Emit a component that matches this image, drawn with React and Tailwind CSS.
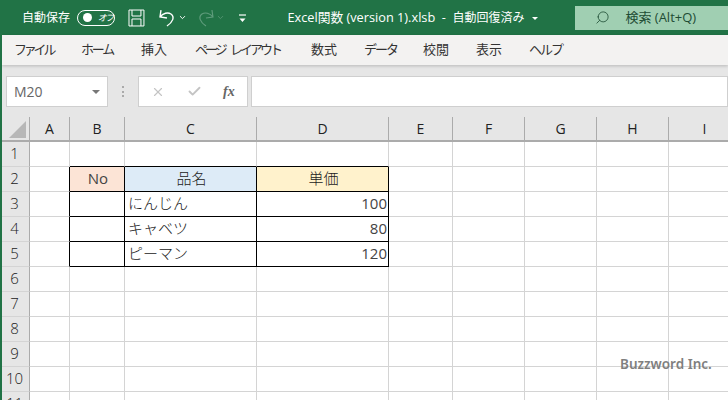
import React from 'react';
import { Search, ChevronDown, X, Check } from 'lucide-react';

const jp = 'font-["Open_Sans","Noto_Sans_CJK_JP",sans-serif]';
const cols = [
  { name: 'A', w: 'w-[40px]' },
  { name: 'B', w: 'w-[55px]' },
  { name: 'C', w: 'w-[132px]' },
  { name: 'D', w: 'w-[132px]' },
  { name: 'E', w: 'w-[64px]' },
  { name: 'F', w: 'w-[72px]' },
  { name: 'G', w: 'w-[72px]' },
  { name: 'H', w: 'w-[72px]' },
  { name: 'I', w: 'w-[72px]' },
];
const rows = [1, 2, 3, 4, 5, 6, 7, 8, 9, 10, 11];
// kana in the ribbon is proportional in the original, so it gets pulled in
const tabs = [
  { label: 'ファイル', w: 'w-[67px]', cls: 'tracking-[-3.2px]' },
  { label: 'ホーム', w: 'w-[60px]', cls: 'tracking-[-2.2px]' },
  { label: '挿入', w: 'w-[54px]', cls: '' },
  { label: 'ページ レイアウト', w: 'w-[116px]', cls: 'tracking-[-3px] [word-spacing:5px]' },
  { label: '数式', w: 'w-[53px]', cls: '' },
  { label: 'データ', w: 'w-[59px]', cls: 'tracking-[-2px]' },
  { label: '校閲', w: 'w-[53px]', cls: '' },
  { label: '表示', w: 'w-[53px]', cls: '' },
  { label: 'ヘルプ', w: 'w-[60px]', cls: 'tracking-[-2px]' },
];
const data = {
  '2B': { text: 'No', cls: 'bg-[#fce4d6] justify-center font-normal text-[#444]' },
  '2C': { text: '品名', cls: 'bg-[#ddebf7] justify-center' },
  '2D': { text: '単価', cls: 'bg-[#fff2cc] justify-center' },
  '3C': { text: 'にんじん' },
  '3D': { text: '100', cls: 'justify-end font-normal text-[#444]' },
  '4C': { text: 'キャベツ' },
  '4D': { text: '80', cls: 'justify-end font-normal text-[#444]' },
  '5C': { text: 'ピーマン' },
  '5D': { text: '120', cls: 'justify-end font-normal text-[#444]' },
};

const inTable = (r, c) => r >= 2 && r <= 5 && ['B', 'C', 'D'].includes(c);

function Cell({ r, col }) {
  const c = col.name;
  const d = data[r + c];
  // black table borders also fall on the neighbour's right/bottom edge
  const right = inTable(r, c) || (c === 'A' && r >= 2 && r <= 5);
  const bottom = inTable(r, c) || (r === 1 && ['B', 'C', 'D'].includes(c));
  return (
    <div
      className={`${col.w} h-[25px] shrink-0 flex items-center pl-[3px] pr-px pb-px border-r border-b text-[15px] font-light text-[#222] ${right ? 'border-r-black' : 'border-r-[#d4d4d4]'} ${bottom ? 'border-b-black' : 'border-b-[#d4d4d4]'} ${d && d.cls ? d.cls : ''}`}
    >
      {d ? d.text : ''}
    </div>
  );
}

export default function App() {
  return (
    <div className={`relative w-[728px] h-[400px] overflow-hidden bg-white border-l-2 border-[#217346] ${jp}`}>
      {/* title bar */}
      <div className="-ml-[2px] h-[35px] bg-[#217346] text-white flex items-center">
        <span className="ml-[22px] w-[55px] whitespace-nowrap text-[12px]">自動保存</span>
        <div className="w-[38px] h-[16px] rounded-full border border-white flex items-center pl-[5px] gap-[6px]">
          <span className="w-[9px] h-[9px] rounded-full bg-white" />
          <span className="text-[9px] italic leading-none tracking-[-1.5px]">オフ</span>
        </div>
        <svg className="ml-[13px]" width="17" height="18" viewBox="0 0 17 18" fill="none" stroke="#fff" strokeWidth="1">
          <path d="M1 1h15v16H1z" />
          <path d="M4 1v6h9V1M4 17v-7h9v7" />
        </svg>
        <svg className="ml-[13px]" width="18" height="18" viewBox="0 0 18 18" fill="none" stroke="#fff" strokeWidth="1.4">
          <path d="M3 1L2 8l7 1M2 8C5 4 10 3 13 5c4 3 2 8-4 12" />
        </svg>
        <ChevronDown className="ml-[2px]" size={9} strokeWidth={2.5} />
        <svg className="ml-[10px]" width="18" height="18" viewBox="0 0 18 18" fill="none" stroke="#5f9c7c" strokeWidth="1.2">
          <path d="M15 1l1 7-7 1M16 8C13 4 8 3 5 5c-4 3-2 8 4 12" />
        </svg>
        <ChevronDown className="ml-[2px] text-[#5f9c7c]" size={9} strokeWidth={2} />
        <svg className="ml-[13px]" width="9" height="10" viewBox="0 0 9 10" fill="none" stroke="#fff" strokeWidth="1.2">
          <path d="M1 2h7" />
          <path d="M1.5 5.5h6L4.5 9z" fill="#fff" stroke="none" />
        </svg>
        <span className="ml-[40px] w-[289px] whitespace-nowrap text-[12.75px]">
          Excel関数 (version 1).xlsb&nbsp; - &nbsp;<span className="text-[12px]">自動回復済み</span>
          <span className="inline-block ml-[7px] align-middle w-0 h-0 border-x-[3px] border-x-transparent border-t-[3px] border-t-white" />
        </span>
        <div className="w-[153px] h-[24px] bg-[#a0cfb2] text-[#1e4c34] flex items-center pl-[20px] text-[13px]">
          <Search size={15} strokeWidth={1.3} className="-scale-x-100" />
          <span className="ml-[15px]">検索 (Alt+Q)</span>
        </div>
      </div>

      {/* ribbon tabs */}
      <div className="h-[30px] bg-[#f3f2f1] flex items-center pl-[12px] text-[13px] text-[#333] shadow-[0_1px_3px_rgba(0,0,0,0.2)] relative">
        {tabs.map((t) => (
          <span key={t.label} className={`${t.w} ${t.cls} shrink-0 whitespace-nowrap`}>{t.label}</span>
        ))}
      </div>

      {/* formula bar */}
      <div className="h-[52px] bg-[#e6e6e6] flex items-start pt-[11px] pl-[4px]">
        <div className="w-[102px] h-[31px] bg-white border border-[#cfcfcf] flex items-center justify-between pl-[7px] pr-[7px] text-[14px] text-[#666]">
          <span>M20</span>
          <span className="w-0 h-0 border-x-[4px] border-x-transparent border-t-[4px] border-t-[#777]" />
        </div>
        <div className="w-[30px] h-[31px] flex items-center justify-center">
          <span className="w-[2px] h-[11px] border-l-2 border-dotted border-[#aaa]" />
        </div>
        <div className="w-[110px] h-[31px] bg-white border border-[#cfcfcf] flex items-center pl-[12px]">
          <X size={14} strokeWidth={2} className="text-[#c4c4c4]" />
          <Check size={15} strokeWidth={3} className="ml-[22px] text-[#c4c4c4]" />
          <span className="ml-[21px] text-[14px] italic font-bold text-[#666] font-['Liberation_Serif',serif]">fx</span>
        </div>
        <div className="ml-[3px] flex-1 h-[31px] bg-white border border-[#cfcfcf]" />
      </div>

      {/* column headers */}
      <div className="flex h-[25px] bg-[#e6e6e6] border-b-2 border-[#ababab] text-[14px] text-[#222]">
        <div className="w-[28px] shrink-0 border-r border-[#ababab] flex items-end justify-end pr-[3px] pb-[2px]">
          <svg width="17" height="17" viewBox="0 0 17 17"><path d="M17 0v17H0z" fill="#b7b7b7" /></svg>
        </div>
        {cols.map((col) => (
          <div key={col.name} className={`${col.w} shrink-0 border-r border-[#ababab] flex items-center justify-center`}>
            {col.name}
          </div>
        ))}
      </div>

      {/* rows */}
      {rows.map((r) => (
        <div key={r} className="flex">
          <div className="w-[28px] h-[25px] shrink-0 bg-[#e6e6e6] border-r border-r-[#ababab] border-b border-b-[#d4d4d4] flex items-center justify-center pr-[2px] pb-px text-[15px] font-light text-[#222]">
            {r}
          </div>
          {cols.map((col) => (
            <Cell key={col.name} r={r} col={col} />
          ))}
        </div>
      ))}

      {/* watermark */}
      <div className="absolute left-[618px] top-[354px] text-[13.5px] font-semibold text-[#7f7f7f] font-['Noto_Sans',sans-serif] whitespace-nowrap">
        Buzzword Inc.
      </div>
    </div>
  );
}
